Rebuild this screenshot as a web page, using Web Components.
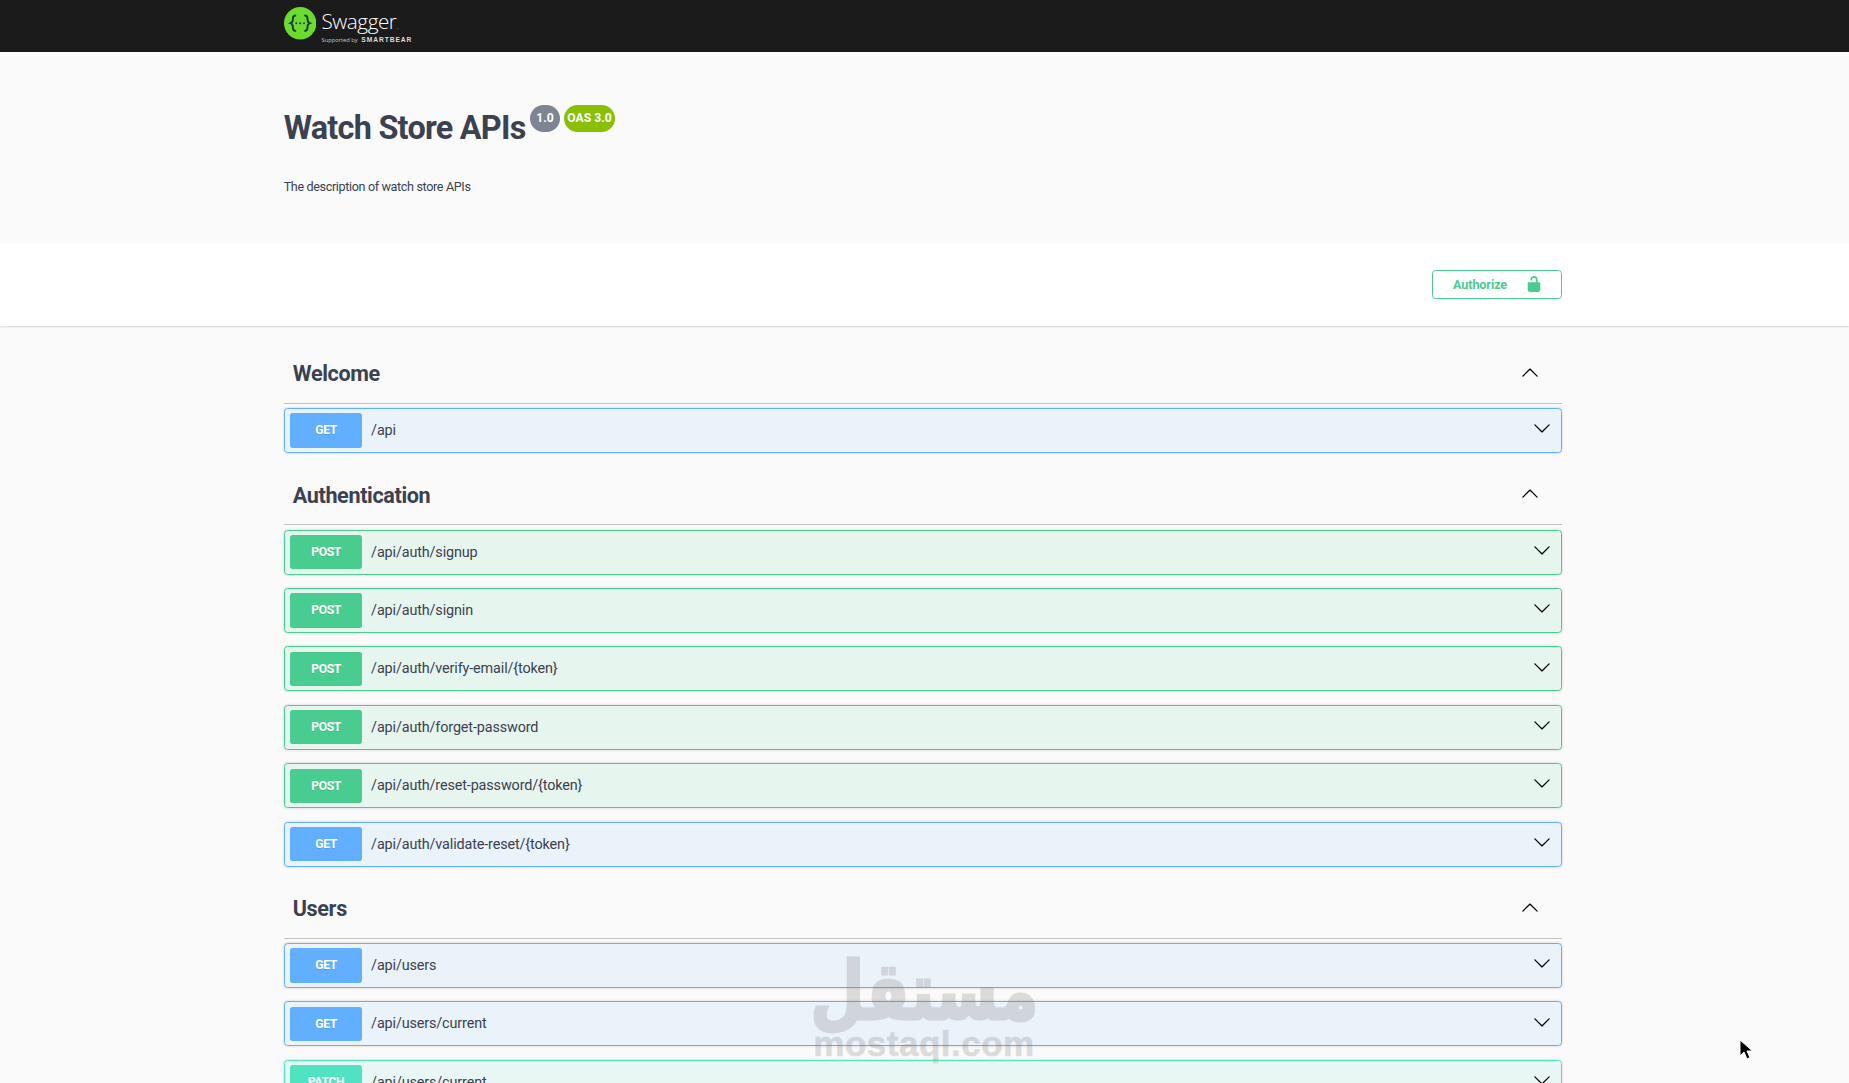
<!DOCTYPE html>
<html lang="en"><head><meta charset="utf-8"><title>Swagger UI</title>
<style>
html,body{margin:0;padding:0;height:1083px;overflow:hidden;background:#fafafa}
body{font-family:"Roboto","Noto Sans",sans-serif;color:#3b4151;position:relative}
swagger-page{display:block;zoom:.9}
</style></head><body>
<swagger-page>
  <swagger-topbar></swagger-topbar>
  <api-info title-text="Watch Store APIs" version="1.0" oas="OAS 3.0" desc="The description of watch store APIs"></api-info>
  <auth-bar></auth-bar>
  <api-list>
    <api-tag name="Welcome">
      <api-row method="get" path="/api"></api-row>
    </api-tag>
    <api-tag name="Authentication">
      <api-row method="post" path="/api/auth/signup"></api-row>
      <api-row method="post" path="/api/auth/signin"></api-row>
      <api-row method="post" path="/api/auth/verify-email/{token}"></api-row>
      <api-row method="post" path="/api/auth/forget-password"></api-row>
      <api-row method="post" path="/api/auth/reset-password/{token}"></api-row>
      <api-row method="get" path="/api/auth/validate-reset/{token}"></api-row>
    </api-tag>
    <api-tag name="Users">
      <api-row method="get" path="/api/users"></api-row>
      <api-row method="get" path="/api/users/current"></api-row>
      <api-row method="patch" path="/api/users/current"></api-row>
    </api-tag>
  </api-list>
</swagger-page>
<mostaql-mark></mostaql-mark>
<mouse-pointer></mouse-pointer>
<script>
const FONT='"Roboto","Noto Sans",sans-serif';
const ARROW='M17.418 6.109c.272-.268.709-.268.979 0s.271.701 0 .969l-7.908 7.83c-.27.268-.707.268-.979 0l-7.908-7.83c-.27-.268-.27-.701 0-.969.271-.268.709-.268.979 0L10 13.25l7.418-7.141z';
function def(name,css,html){
  customElements.define(name,class extends HTMLElement{
    connectedCallback(){
      if(this.shadowRoot)return;
      const s=this.attachShadow({mode:'open'});
      s.innerHTML='<style>'+css+'</style>'+(typeof html==='function'?html(this):html);
    }
  });
}
def('swagger-topbar',`
:host{display:block;background:#1b1b1b;height:57.5px;font-family:"Open Sans",sans-serif;padding-right:4px}
.wrap{max-width:1420px;margin:0 auto;height:100%;display:flex;align-items:center;gap:6px;padding-bottom:4px;box-sizing:border-box}
svg{width:36px;height:36px;display:block;flex:none;margin-top:-1px}
.t{display:flex;flex-direction:column;color:#fff;line-height:1}
.s{font-size:23px;font-weight:300;letter-spacing:-.5px;margin-top:7px;line-height:24px}
.s i{font-style:normal;font-size:8px;opacity:.6;margin-left:1px}
.b{font-size:6.4px;display:flex;align-items:baseline;gap:4px;margin-top:0;color:#c9c9c9;white-space:nowrap}
.b b{font-family:"Liberation Sans",sans-serif;font-size:7.4px;font-weight:700;letter-spacing:1.05px;color:#ddd}
`,`<div class="wrap"><svg viewBox="0 0 40 40"><circle cx="20" cy="20" r="20" fill="#6bdc2e"/><g fill="none" stroke="#173646" stroke-width="2.3" stroke-linecap="round"><path d="M14 10.500c-3.100 0-3.100 2.400-3.100 4.700s.1 3.800-2.700 4.800c2.800 1 2.700 2.500 2.700 4.800s0 4.700 3.100 4.700"/><path d="M26 10.500c3.100 0 3.100 2.400 3.100 4.700s-.1 3.800 2.700 4.800c-2.800 1-2.700 2.500-2.700 4.800s0 4.700-3.100 4.700"/></g><g fill="#173646"><circle cx="15.200" cy="20" r="1.200"/><circle cx="20" cy="20" r="1.200"/><circle cx="24.800" cy="20" r="1.200"/></g></svg>
<div class="t"><div class="s">Swagger<i>.</i></div><div class="b">Supported by <b>SMARTBEAR</b></div></div></div>`);
def('api-info',`
:host{display:block;height:212.500px;font-family:${FONT};color:#3b4151;box-sizing:border-box;padding-right:4px}
.wrap{max-width:1420px;margin:0 auto;padding-top:60px}
.h{display:flex;align-items:flex-start}
h2{margin:0;font-size:36px;line-height:50px;font-weight:700;white-space:nowrap;letter-spacing:-.82px}
.p{display:inline-block;color:#fff;font-weight:700;font-size:13.500px;line-height:30px;height:30px;border-radius:57px;text-align:center;margin-top:-1px;margin-left:5px;white-space:nowrap}
.v{background:#7d8492;width:33px}
.o{background:#89bf04;width:56px}
p{margin:30px 0 0;font-size:14px;line-height:21px;letter-spacing:-.4px}
`,e=>`<div class="wrap"><div class="h"><h2>${e.getAttribute('title-text')}</h2><span class="p v">${e.getAttribute('version')}</span><span class="p o">${e.getAttribute('oas')}</span></div><p>${e.getAttribute('desc')}</p></div>`);
def('auth-bar',`
:host{display:block;background:#fff;box-shadow:0 1px 2px 0 rgba(0,0,0,.15);padding:30px 4px 30px 0;margin-bottom:21.300px;font-family:${FONT}}
.wrap{max-width:1420px;margin:0 auto;display:flex;justify-content:flex-end}
button{all:unset;box-sizing:border-box;display:flex;align-items:center;justify-content:center;gap:20px;width:144.500px;height:32px;border:2px solid #49cc90;border-radius:4px;color:#49cc90;font:700 14px ${FONT};letter-spacing:-.1px;background:#fff}
svg{width:20px;height:20px;fill:#49cc90;display:block;margin-right:-3px}
`,`<div class="wrap"><button>Authorize<svg viewBox="0 0 20 20"><path d="M15.800 8H14V5.600C14 2.703 12.665 1 10 1 7.334 1 6 2.703 6 5.600V6h2v-.801C8 3.754 8.797 3 10 3c1.203 0 2 .754 2 2.199V8H4c-.553 0-1 .646-1 1.199V17c0 .549.428 1.139.951 1.307l1.197.387C5.672 18.861 6.550 19 7.100 19h5.800c.549 0 1.428-.139 1.951-.307l1.196-.387c.524-.167.953-.757.953-1.306V9.199C17 8.646 16.352 8 15.800 8z"/></svg></button></div>`);
def('api-list',`:host{display:block;padding-right:4px}.wrap{max-width:1420px;margin:0 auto}`,`<div class="wrap"><slot></slot></div>`);
def('api-tag',`
:host{display:block;font-family:${FONT}}
.head{height:64px;border-bottom:1px solid rgba(59,65,81,.3);display:flex;align-items:center;justify-content:space-between;padding:0 20px 0 10px;margin-bottom:5px;color:#3b4151;font-size:24px;font-weight:700;letter-spacing:-.4px}
svg{width:20px;height:20px;transform:rotate(180deg);display:block;margin-right:5px;margin-top:-2px;fill:#000}
`,e=>`<div class="head"><span>${e.getAttribute('name')}</span><svg viewBox="0 0 20 20"><path d="${ARROW}"/></svg></div><slot></slot>`);
def('api-row',`
:host{display:block;margin-bottom:14.900px;font-family:${FONT}}
.r{box-sizing:border-box;height:50px;border:1px solid var(--c);border-radius:4px;background:var(--b);box-shadow:0 0 3px rgba(0,0,0,.19);display:flex;align-items:center;padding:5px 5px 5px 6px}
.get{--c:#61affe;--b:rgba(97,175,254,.1)}
.post{--c:#49cc90;--b:rgba(73,204,144,.1)}
.patch{--c:#50e3c2;--b:rgba(80,227,194,.1)}
.m{flex:none;width:80px;height:38px;line-height:38px;background:var(--c);color:#fff;border-radius:3px;text-align:center;font-weight:700;font-size:13.500px;letter-spacing:-.35px;text-transform:uppercase;text-shadow:0 1px 0 rgba(0,0,0,.1)}
.p{flex:1;padding:0 10px;font-size:16px;color:#3b4151;letter-spacing:-.15px}
svg{width:20px;height:20px;flex:none;margin-right:6px;margin-top:-5px;fill:#000}
`,e=>`<div class="r ${e.getAttribute('method')}"><span class="m">${e.getAttribute('method')}</span><span class="p">${e.getAttribute('path')}</span><svg viewBox="0 0 20 20"><path d="${ARROW}"/></svg></div>`);
def('mostaql-mark',`
:host{position:absolute;left:813px;top:954px;width:222px;height:108px;pointer-events:none;color:#666;opacity:.2;display:block}
.a{font:700 80px/76px "DejaVu Sans",sans-serif;white-space:nowrap;height:76px;display:flex;justify-content:center;-webkit-text-stroke:3px #666}
.a span{display:block;transform:scaleX(.78)}
.l{font:700 35px/32px "Liberation Sans",sans-serif;white-space:nowrap;letter-spacing:.5px;text-align:center;margin-top:-2px;-webkit-text-stroke:.5px #666}
`,`<div class="a" lang="ar"><span dir="rtl">مستقل</span></div><div class="l">mostaql.com</div>`);
def('mouse-pointer',`
:host{position:absolute;left:1738px;top:1039px;width:16px;height:23px;pointer-events:none}
svg{display:block;width:16px;height:23px}
`,`<svg viewBox="0 0 16 23"><path d="M2 1l0 16 4-4 3 7 3-1.500-3-6.500h5.500z" fill="#000" stroke="#fff" stroke-width="1"/></svg>`);
</script>
</body></html>
